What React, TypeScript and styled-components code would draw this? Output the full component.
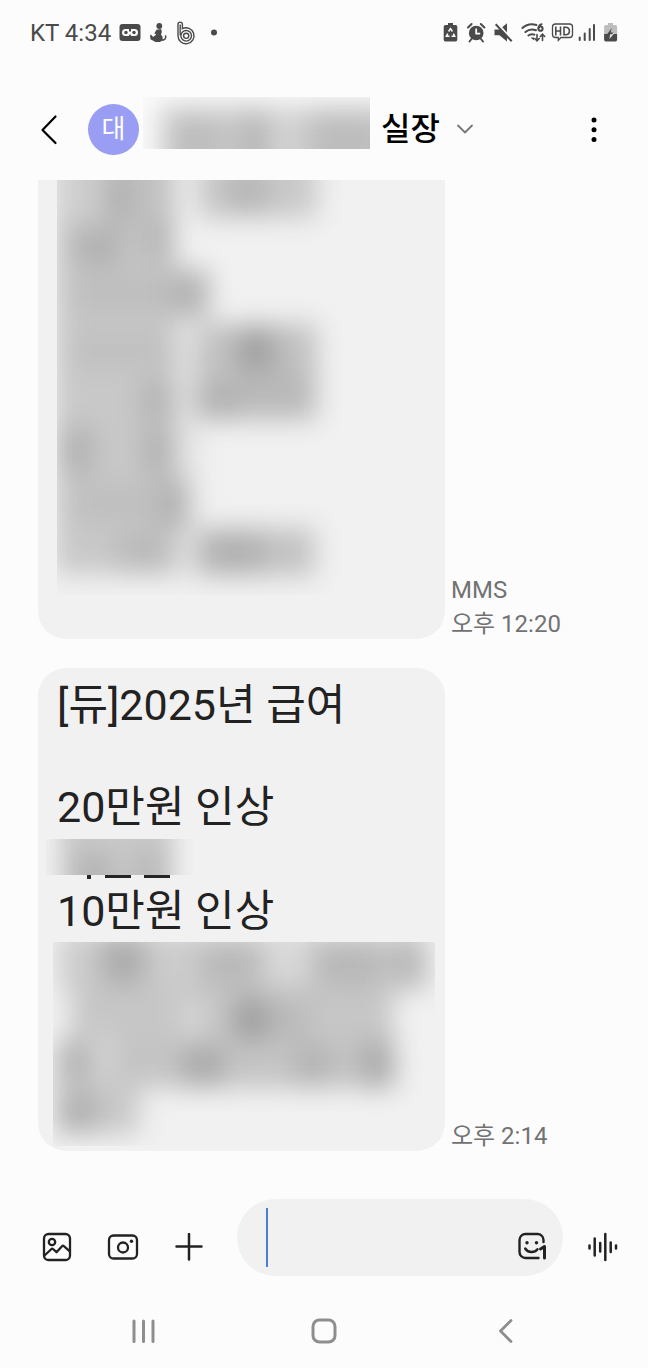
import React from "react";
import styled, { createGlobalStyle } from "styled-components";

const GlobalStyle = createGlobalStyle`
  * { box-sizing: border-box; }
  body {
    margin: 0;
    background: #fcfcfc;
    color: #222;
    font-family: Roboto, "Noto Sans CJK KR", sans-serif;
  }
`;

const Screen = styled.div`
  display: flex;
  flex-direction: column;
  min-height: 100vh;
`;

const StatusBar = styled.div`
  display: flex;
  justify-content: space-between;
  align-items: center;
  height: 64px;
  padding: 2px 30px 0;
  color: #4a4a4a;
  font-size: 24px;
  line-height: 30px;
`;

const StatusGroup = styled.div<{ $gap: number }>`
  display: flex;
  align-items: center;
  gap: ${(p) => p.$gap}px;
`;

const IconButton = styled.button<{ $width: number; $height: number }>`
  display: flex;
  align-items: center;
  justify-content: center;
  flex: none;
  width: ${(p) => p.$width}px;
  height: ${(p) => p.$height}px;
  padding: 0;
  border: 0;
  background: none;
  color: inherit;
  cursor: pointer;
`;

const Header = styled.header`
  display: flex;
  align-items: center;
  height: 116px;
  padding: 14px 34px 0 24px;
  color: #000;
`;

const Avatar = styled.div`
  display: flex;
  align-items: center;
  justify-content: center;
  flex: none;
  width: 51px;
  height: 51px;
  margin: 0 4px 0 14px;
  border-radius: 50%;
  background: #999df4;
  color: #fff;
  font-size: 26px;
  line-height: 30px;
`;

const HiddenName = styled.div`
  align-self: flex-start;
  height: 52px;
  margin: 19px 11px 0 0;
`;

const Title = styled.h1`
  margin: 0 8px 0 0;
  font-size: 32px;
  line-height: 40px;
  font-weight: 500;
  white-space: nowrap;
`;

const Spacer = styled.div`
  flex: 1;
`;

const Thread = styled.main`
  display: flex;
  flex-direction: column;
  gap: 29px;
  padding: 0 38px;
`;

const MessageRow = styled.article`
  display: grid;
  grid-template-columns: minmax(0, 407px) auto;
  justify-content: start;
  align-items: end;
  gap: 6px;
`;

const Bubble = styled.div<{ $continued?: boolean }>`
  overflow: hidden;
  padding: ${(p) => (p.$continued ? "0 0 44px" : "11px 0 5px")};
  border-radius: ${(p) => (p.$continued ? "0 0 28px 28px" : "28px")};
  background: #f1f1f1;
`;

const Line = styled.p<{ $after?: number }>`
  margin: 0 19px ${(p) => p.$after ?? 0}px;
  font-size: 43px;
  line-height: 52px;
`;

const Hidden = styled.div<{ $left: number; $y?: number; $top?: number }>`
  margin: ${(p) => p.$top ?? p.$y ?? 0}px 0 ${(p) => p.$y ?? 0}px ${(p) => p.$left}px;
`;

const Meta = styled.div`
  display: flex;
  flex-direction: column;
  gap: 4px;
  color: #727272;
  font-size: 24px;
  line-height: 30px;
  white-space: nowrap;
`;

const Composer = styled.form`
  display: flex;
  align-items: flex-end;
  padding: 48px 15px 18px 24px;
`;

const Field = styled.label`
  display: flex;
  align-items: flex-end;
  flex: 1;
  min-width: 0;
  height: 77px;
  margin: 0 10px 0 15px;
  padding: 0 4px 0 29px;
  border-radius: 39px;
  background: #f1f1f1;
`;

const Caret = styled.span`
  flex: none;
  align-self: center;
  width: 2px;
  height: 59px;
  background: #4a80d4;
`;

const TextInput = styled.input`
  flex: 1;
  align-self: stretch;
  min-width: 0;
  padding: 0;
  border: 0;
  outline: 0;
  background: none;
  font: inherit;
  font-size: 43px;
`;

const NavBar = styled.nav`
  display: grid;
  grid-template-columns: repeat(3, 1fr);
  justify-items: center;
  align-items: center;
  height: 74px;
  padding: 0 52px;
  color: #8e8e8e;
`;

const Block = styled.svg`
  display: block;
  flex: none;
`;

/* x, y, width, height, shade */
type Blob = [number, number, number, number, string];

function Redaction(props: {
  id: string;
  width: number;
  height: number;
  blur: number;
  fill: string;
  blobs: Blob[];
  peek?: Blob[];
}) {
  const { id, width, height, blur, fill, blobs, peek = [] } = props;
  const total = height + (peek.length ? 4 : 0);
  return (
    <Block width={width} height={total} viewBox={`0 0 ${width} ${total}`} aria-hidden="true">
      <defs>
        <filter id={id} filterUnits="userSpaceOnUse" x={-60} y={-60} width={width + 120} height={height + 120} colorInterpolationFilters="sRGB">
          <feGaussianBlur stdDeviation={blur} />
        </filter>
        <clipPath id={`${id}-clip`}>
          <rect width={width} height={height} />
        </clipPath>
      </defs>
      <g clipPath={`url(#${id}-clip)`}>
        <rect width={width} height={height} fill={fill} />
        <g filter={`url(#${id})`}>
          {blobs.map(([x, y, w, h, shade], i) => (
            <rect key={i} x={x} y={y} width={w} height={h} fill={shade} />
          ))}
        </g>
      </g>
      {peek.map(([x, y, w, h, shade], i) => (
        <rect key={i} x={x} y={y} width={w} height={h} fill={shade} />
      ))}
    </Block>
  );
}

const nameBlobs: Blob[] = [
  [18, 10, 240, 90, "#cbcbcb"],
  [30, 18, 50, 60, "#bebebe"],
  [98, 14, 26, 70, "#b6b6b6"],
  [126, 12, 34, 80, "#d2d2d2"],
  [168, 14, 70, 70, "#bdbdbd"],
];

const listBlobs: Blob[] = [
  [-2, -40, 50, 90, "#cecece"],
  [44, -40, 74, 90, "#c1c1c1"],
  [-2, 40, 120, 354, "#c8c8c8"],
  [50, -10, 24, 54, "#b0b0b0"],
  [16, 48, 50, 38, "#b2b2b2"],
  [86, 40, 30, 42, "#b6b6b6"],
  [16, 94, 104, 38, "#bebebe"],
  [112, 90, 40, 48, "#b4b4b4"],
  [16, 152, 100, 36, "#c0c0c0"],
  [84, 200, 32, 40, "#b4b4b4"],
  [4, 248, 32, 46, "#b2b2b2"],
  [86, 248, 30, 46, "#b2b2b2"],
  [14, 304, 94, 38, "#bfbfbf"],
  [104, 300, 26, 48, "#b0b0b0"],
  [60, 352, 56, 40, "#bababa"],
  [118, 150, 24, 150, "#e2e2e2"],
  [130, 300, 12, 96, "#e2e2e2"],
  [116, 348, 20, 48, "#dedede"],
  [140, -40, 120, 78, "#c9c9c9"],
  [168, -6, 44, 38, "#b6b6b6"],
  [140, 144, 120, 96, "#c1c1c1"],
  [180, 148, 38, 46, "#a2a2a2"],
  [184, 190, 70, 46, "#b9b9b9"],
  [140, 202, 42, 38, "#b2b2b2"],
  [140, 348, 118, 48, "#c3c3c3"],
  [148, 352, 60, 40, "#b0b0b0"],
];

const shortBlobs: Blob[] = [
  [14, -30, 114, 100, "#c8c8c8"],
  [28, 14, 38, 50, "#b6b6b6"],
  [84, 12, 34, 50, "#bcbcbc"],
];

const paragraphBlobs: Blob[] = [
  [6, -10, 368, 58, "#cccccc"],
  [48, -6, 44, 48, "#acacac"],
  [148, 2, 60, 42, "#b9b9b9"],
  [262, 2, 66, 42, "#b8b8b8"],
  [336, 0, 38, 46, "#bababa"],
  [210, -8, 46, 48, "#d8d8d8"],
  [18, 44, 322, 60, "#c6c6c6"],
  [128, 54, 20, 44, "#d7d7d7"],
  [180, 56, 36, 44, "#a0a0a0"],
  [214, 58, 40, 40, "#b9b9b9"],
  [2, 98, 340, 48, "#c4c4c4"],
  [8, 102, 30, 44, "#b4b4b4"],
  [40, 90, 20, 66, "#d6d6d6"],
  [130, 104, 40, 40, "#aaaaaa"],
  [242, 104, 36, 40, "#b4b4b4"],
  [308, 100, 34, 46, "#acacac"],
  [2, 140, 84, 52, "#c8c8c8"],
  [8, 152, 36, 38, "#b0b0b0"],
];

const tips: Blob[] = [
  [41, 36, 4, 4, "#262626"],
  [59, 36, 26, 3, "#262626"],
  [98, 36, 26, 3, "#262626"],
];

function NotificationIcons() {
  return (
    <Block width="100" height="26" viewBox="119 20 100 26" fill="currentColor" aria-hidden="true">
      <rect x="119.500" y="24" width="21" height="17" rx="3" />
      <rect x="122" y="29" width="16" height="7" rx="3.5" fill="#fcfcfc" />
      <circle cx="126" cy="32.5" r="1.7" />
      <circle cx="134" cy="32.5" r="1.7" />
      <path d="M129 29h2v2.4h-2zM128.6 36l1.4-2 1.4 2z" />
      <circle cx="159.300" cy="26" r="2.900" />
      <path d="M156.500 29.800l4.700-.8.600 3-.8 2.500 1.500 2.200.3 3.300-2.800 2h-4.500l-5-2.800-.300-3.700 3.300 1.300 2.800-2.300-2-1z" />
      <path d="M161 40.300c3.500-.1 5.200-1.300 4.600-4.300M151 35.600l.8 3" fill="none" stroke="currentColor" strokeWidth="1.600" strokeLinecap="round" />
      <g fill="none" stroke="currentColor" strokeWidth="1.400">
        <path d="M178 36V24.300a2.200 2.200 0 0 1 4.400 0V28.600A8 8 0 1 1 178 36z" />
        <path d="M180.200 24.500v11" />
        <circle cx="186.200" cy="35.800" r="5.300" />
        <circle cx="186.200" cy="35.800" r="2.600" />
      </g>
      <circle cx="214" cy="32.500" r="3" />
    </Block>
  );
}

function SystemIcons() {
  return (
    <Block width="175" height="26" viewBox="443 20 175 26" fill="currentColor" aria-hidden="true">
      <path d="M448 23h5v2h2.500a1.800 1.800 0 0 1 1.800 1.800v13a1.800 1.800 0 0 1-1.800 1.800h-10a1.800 1.800 0 0 1-1.800-1.800v-13a1.800 1.800 0 0 1 1.800-1.800h2.500z" />
      <g fill="none" stroke="#fcfcfc" strokeWidth="1.500">
        <path d="M448.600 31.500l1.900-2.900 1.900 2.900M453.400 33.600l1.300 2.700h-3.200M449.500 36.300h-3.100l1.300-2.700" />
      </g>
      <circle cx="476.200" cy="33" r="7.300" />
      <path d="M476.200 28.500v5.200h4" fill="none" stroke="#fcfcfc" strokeWidth="1.800" />
      <path d="M468 27.500l3.600-3.500M480.800 24l3.600 3.500M471.500 39l-2 2.500M481 39l2 2.500" stroke="currentColor" strokeWidth="2" strokeLinecap="round" />
      <path d="M494.500 29.500h5l7.500-6.300v18.400l-7.500-6.300h-5z" />
      <path d="M497.200 23.300l15.600 17" stroke="#fcfcfc" strokeWidth="2" />
      <path d="M495.700 24.300l16 17" stroke="currentColor" strokeWidth="2" />
      <g fill="none" stroke="currentColor" strokeWidth="2" strokeLinecap="round">
        <path d="M522.400 28c4-3.600 9.500-4.500 14-3" />
        <path d="M525.400 32c3-2.500 7-3.200 10.600-1.800" />
        <path d="M528.400 35.500c1.800-1.400 4-1.700 6-.8" />
        <circle cx="540.500" cy="28.700" r="2.100" />
        <path d="M538.500 28c.2-1.900 1.300-3.200 3-3.800" />
        <path d="M537 34.500v6M534.800 38.500l2.200 2.300 2.200-2.300M542.500 40.500v-6M540.300 36.500l2.200-2.300 2.200 2.300" strokeWidth="1.600" />
      </g>
      <path d="M530.500 37.500h3.500v3z" />
      <g fill="none" stroke="currentColor">
        <path d="M555.500 24h14a3 3 0 0 1 3 3v7.500a3 3 0 0 1-3 3h-8.500l-2.700 2.800v-2.800h-2.800a3 3 0 0 1-3-3V27a3 3 0 0 1 3-3z" strokeWidth="1.300" />
        <path d="M555.800 26.500v9M555.800 31h4.700M560.500 26.500v9M564 27.200v7.600h1.500c2.700 0 3.900-1.200 3.900-3.800s-1.200-3.800-3.900-3.800z" strokeWidth="1.600" />
      </g>
      <path d="M579.700 37.500v2.500M584.700 33.500v6.500M589.700 29v11M594 25v15" stroke="currentColor" strokeWidth="2" strokeLinecap="round" />
      <path d="M608 23h5v2h2.300a1.800 1.800 0 0 1 1.800 1.800v7.200h-13v-7.200a1.800 1.800 0 0 1 1.800-1.800h2.100z" fill="#bdbdbd" />
      <path d="M604.100 34h13v5.800a1.800 1.800 0 0 1-1.800 1.800h-9.400a1.800 1.800 0 0 1-1.800-1.800z" />
      <path d="M611.800 28l-4.600 6h3z" />
      <path d="M609.500 39l5-6h-4.200z" fill="#e4e4e4" />
      <path d="M609.800 32.500h3.600l-1.200 1.800h-3.200z" />
    </Block>
  );
}

export default function App() {
  return (
    <Screen>
      <GlobalStyle />
      <StatusBar>
        <StatusGroup $gap={8}>
          <span>KT 4:34</span>
          <NotificationIcons />
        </StatusGroup>
        <SystemIcons />
      </StatusBar>

      <Header>
        <IconButton $width={50} $height={50} aria-label="뒤로">
          <Block width="18" height="32" viewBox="0 0 18 32" fill="none" stroke="currentColor" strokeWidth="2.200" strokeLinecap="round" strokeLinejoin="round">
            <path d="M15.500 3.500L2.500 17l13 13" />
          </Block>
        </IconButton>
        <Avatar>대</Avatar>
        <HiddenName>
          <Redaction id="name" width={227} height={52} blur={13} fill="#fafafa" blobs={nameBlobs} />
        </HiddenName>
        <Title>실장</Title>
        <IconButton $width={34} $height={34} aria-label="대화 정보">
          <Block width="18" height="12" viewBox="0 0 18 12" fill="none" stroke="#777" strokeWidth="1.800" strokeLinecap="round" strokeLinejoin="round">
            <path d="M2 2.500l7 7 7-7" />
          </Block>
        </IconButton>
        <Spacer />
        <IconButton $width={40} $height={50} aria-label="더보기">
          <Block width="6" height="28" viewBox="0 0 6 28" fill="currentColor">
            <circle cx="3" cy="5" r="2.500" />
            <circle cx="3" cy="14.800" r="2.500" />
            <circle cx="3" cy="24.500" r="2.500" />
          </Block>
        </IconButton>
      </Header>

      <Thread>
        <MessageRow>
          <Bubble $continued>
            <Hidden $left={19}>
              <Redaction id="list" width={286} height={415} blur={13} fill="#f1f1f1" blobs={listBlobs} />
            </Hidden>
          </Bubble>
          <Meta>
            <span>MMS</span>
            <time>오후 12:20</time>
          </Meta>
        </MessageRow>
        <MessageRow>
          <Bubble>
            <Line $after={50}>[듀]2025년 급여</Line>
            <Line>20만원 인상</Line>
            <Hidden $left={8} $y={6}>
              <Redaction id="short" width={147} height={36} blur={11} fill="#f1f1f1" blobs={shortBlobs} peek={tips} />
            </Hidden>
            <Line>10만원 인상</Line>
            <Hidden $left={15} $top={5}>
              <Redaction id="paragraph" width={382} height={204} blur={13} fill="#f1f1f1" blobs={paragraphBlobs} />
            </Hidden>
          </Bubble>
          <Meta>
            <time>오후 2:14</time>
          </Meta>
        </MessageRow>
      </Thread>

      <Composer onSubmit={(e) => e.preventDefault()}>
        <IconButton type="button" $width={66} $height={58} aria-label="갤러리">
          <Block width="30" height="30" viewBox="0 0 30 30" fill="none" stroke="currentColor" strokeWidth="2.300" strokeLinecap="round" strokeLinejoin="round">
            <rect x="2" y="2" width="26" height="26" rx="4.500" />
            <circle cx="10" cy="10" r="3.200" />
            <path d="M2.500 23.500l7-6.500c.6-.5 1-.5 1.500 0l3.500 3.200 5.500-6c.7-.7 1.200-.7 1.900 0l5.600 5" />
          </Block>
        </IconButton>
        <IconButton type="button" $width={66} $height={58} aria-label="카메라">
          <Block width="32" height="28" viewBox="0 0 32 28" fill="none" stroke="currentColor" strokeWidth="2.300">
            <rect x="2" y="2.500" width="28" height="23" rx="4.500" />
            <circle cx="16" cy="14.500" r="5" />
            <circle cx="24.500" cy="8.200" r="1.700" fill="currentColor" stroke="none" />
          </Block>
        </IconButton>
        <IconButton type="button" $width={66} $height={58} aria-label="추가">
          <Block width="28" height="28" viewBox="0 0 28 28" fill="none" stroke="currentColor" strokeWidth="2.500" strokeLinecap="round">
            <path d="M1.500 13.500h25M14 1v25.500" />
          </Block>
        </IconButton>
        <Field>
          <Caret />
          <TextInput type="text" aria-label="메시지" />
          <IconButton type="button" $width={54} $height={60} aria-label="이모티콘">
            <Block width="30" height="28" viewBox="0 0 30 28" fill="none" stroke="currentColor" strokeWidth="2.400" strokeLinecap="round" strokeLinejoin="round">
              <path d="M26.500 10V8a6 6 0 0 0-6-6h-12a6 6 0 0 0-6 6v12a6 6 0 0 0 6 6h13" />
              <path d="M8.200 16.500c2.800 4.500 9.200 4.700 12.300.8" />
              <circle cx="10" cy="10.800" r="1.700" fill="currentColor" stroke="none" />
              <circle cx="19.500" cy="10.800" r="1.700" fill="currentColor" stroke="none" />
              <path d="M23.500 17l4-2.500V26" strokeWidth="3" />
            </Block>
          </IconButton>
        </Field>
        <IconButton type="button" $width={60} $height={58} aria-label="음성 메시지">
          <Block width="32" height="30" viewBox="0 0 32 30" fill="none" stroke="currentColor" strokeWidth="2.500" strokeLinecap="round">
            <path d="M2.500 13.500v3M7.700 6.500v17M13.200 11v8.500M18.300 2v26M23.700 10.500v9.500M29 13.500v3" />
          </Block>
        </IconButton>
      </Composer>

      <NavBar>
        <IconButton $width={60} $height={50} aria-label="최근 앱">
          <Block width="24" height="26" viewBox="0 0 24 26" fill="none" stroke="currentColor" strokeWidth="3" strokeLinecap="round">
            <path d="M3 3v20.500M12.500 3v20.500M22 3v20.500" />
          </Block>
        </IconButton>
        <IconButton $width={60} $height={50} aria-label="홈">
          <Block width="26" height="26" viewBox="0 0 26 26" fill="none" stroke="currentColor" strokeWidth="3">
            <rect x="2" y="2" width="22" height="22" rx="6.500" />
          </Block>
        </IconButton>
        <IconButton $width={60} $height={50} aria-label="뒤로 가기">
          <Block width="16" height="26" viewBox="0 0 16 26" fill="none" stroke="currentColor" strokeWidth="2.800" strokeLinecap="round" strokeLinejoin="round">
            <path d="M14 2.500L3.500 13 14 23.500" />
          </Block>
        </IconButton>
      </NavBar>
    </Screen>
  );
}
